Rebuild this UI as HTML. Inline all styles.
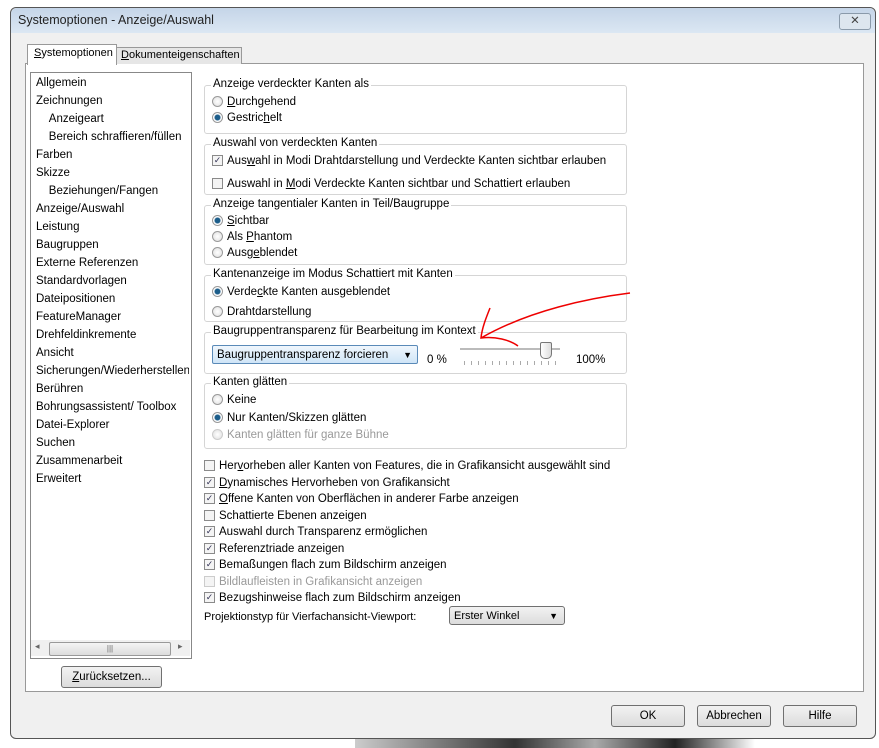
<!DOCTYPE html><html><head><style>
body{margin:0;width:879px;height:748px;background:#fff;position:relative;overflow:hidden;font-family:"Liberation Sans",sans-serif;font-size:11.5px;color:#000}
.a{position:absolute;white-space:nowrap}
.win{position:absolute;left:10px;top:7px;width:864px;height:730px;border:1px solid #555;border-radius:6px;background:#f0f0f0}
.title{position:absolute;left:0;top:0;width:864px;height:25px;background:linear-gradient(#c5d5e8,#dbe7f3);border-radius:6px 6px 0 0}
.panel{position:absolute;left:25px;top:63px;width:837px;height:627px;background:#fff;border:1px solid #999}
.list{position:absolute;left:30px;top:72px;width:160px;height:585px;border:1px solid #888;background:#fff}
.grp{position:absolute;border:1px solid #d5d5d5;border-radius:3px}
.lg{position:absolute;top:-8px;left:6px;background:#fff;padding:0 2px}
.rb{display:inline-block;width:11px;height:11px;border-radius:50%;border:1px solid #999;background:radial-gradient(#fff,#ddd);vertical-align:-2px;margin-right:4px;box-sizing:border-box}
.rb.on{background:radial-gradient(#1c5d8a 2.5px,#fff 3.5px)}
.cb{display:inline-block;width:11px;height:11px;border:1px solid #8a8a8a;background:#f4f4f4;vertical-align:-2px;margin-right:4px;box-sizing:border-box;font-size:9px;line-height:9px;text-align:center;color:#335;overflow:hidden}
.btn{position:absolute;border:1px solid #707070;border-radius:3px;background:linear-gradient(#f2f2f2,#dcdcdc);text-align:center;line-height:20px;height:20px}
.dis{color:#999}
.cl div{height:16.5px;line-height:16px}
</style></head><body>
<div class="win"><div class="title"></div>
<div class="a" style="left:7px;top:5px;font-size:12.5px;color:#222">Systemoptionen - Anzeige/Auswahl</div>
<div class="a" style="left:828px;top:5px;width:30px;height:15px;border:1px solid #8a9aaa;border-radius:3px;background:#dde6ef;text-align:center;line-height:14px;color:#444">✕</div>
</div>
<div class="panel"></div>
<div class="a" style="left:27px;top:44px;width:88px;height:20px;background:#fff;border:1px solid #999;border-bottom:none"></div>
<div class="a" style="left:34px;top:47px;font-size:11px"><u>S</u>ystemoptionen</div>
<div class="a" style="left:116px;top:47px;width:124px;height:16px;background:#e6e6e6;border:1px solid #999;border-bottom:none"></div>
<div class="a" style="left:121px;top:49px;font-size:11px"><u>D</u>okumenteigenschaften</div>
<div class="list"></div>
<div class="a" style="left:36px;top:74px;line-height:18px;font-size:11.5px;width:153px;overflow:hidden">Allgemein<br>Zeichnungen<br>&nbsp;&nbsp;&nbsp;&nbsp;Anzeigeart<br>&nbsp;&nbsp;&nbsp;&nbsp;Bereich schraffieren/füllen<br>Farben<br>Skizze<br>&nbsp;&nbsp;&nbsp;&nbsp;Beziehungen/Fangen<br>Anzeige/Auswahl<br>Leistung<br>Baugruppen<br>Externe Referenzen<br>Standardvorlagen<br>Dateipositionen<br>FeatureManager<br>Drehfeldinkremente<br>Ansicht<br>Sicherungen/Wiederherstellen<br>Berühren<br>Bohrungsassistent/ Toolbox<br>Datei-Explorer<br>Suchen<br>Zusammenarbeit<br>Erweitert</div>
<div class="a" style="left:31px;top:640px;width:159px;height:16px;background:#f0f0f0"></div>
<div class="a" style="left:49px;top:642px;width:120px;height:12px;border:1px solid #999;border-radius:2px;background:linear-gradient(#f4f4f4,#dcdcdc);text-align:center;font-size:8px;line-height:12px;color:#666">|||</div>
<div class="a" style="left:35px;top:641px;font-size:9px;color:#666">◂</div><div class="a" style="left:178px;top:641px;font-size:9px;color:#666">▸</div>
<div class="btn" style="left:61px;top:666px;width:99px"><u>Z</u>urücksetzen...</div>

<div class="grp" style="left:204px;top:85px;width:421px;height:47px"><span class="lg">Anzeige verdeckter Kanten als</span></div>
<div class="a" style="left:212px;top:96px"><span class="rb"></span><u>D</u>urchgehend</div>
<div class="a" style="left:212px;top:112px"><span class="rb on"></span>Gestric<u>h</u>elt</div>

<div class="grp" style="left:204px;top:144px;width:421px;height:49px"><span class="lg">Auswahl von verdeckten Kanten</span></div>
<div class="a" style="left:212px;top:155px"><span class="cb">✓</span>Aus<u>w</u>ahl in Modi Drahtdarstellung und Verdeckte Kanten sichtbar erlauben</div>
<div class="a" style="left:212px;top:178px"><span class="cb"></span>Auswahl in <u>M</u>odi Verdeckte Kanten sichtbar und Schattiert erlauben</div>

<div class="grp" style="left:204px;top:205px;width:421px;height:58px"><span class="lg">Anzeige tangentialer Kanten in Teil/Baugruppe</span></div>
<div class="a" style="left:212px;top:215px"><span class="rb on"></span><u>S</u>ichtbar</div>
<div class="a" style="left:212px;top:231px"><span class="rb"></span>Als <u>P</u>hantom</div>
<div class="a" style="left:212px;top:247px"><span class="rb"></span>Ausg<u>e</u>blendet</div>

<div class="grp" style="left:204px;top:275px;width:421px;height:45px"><span class="lg">Kantenanzeige im Modus Schattiert mit Kanten</span></div>
<div class="a" style="left:212px;top:286px"><span class="rb on"></span>Verde<u>c</u>kte Kanten ausgeblendet</div>
<div class="a" style="left:212px;top:306px"><span class="rb"></span>Drahtdarstellung</div>

<div class="grp" style="left:204px;top:332px;width:421px;height:40px"><span class="lg">Baugruppentransparenz für Bearbeitung im Kontext</span></div>
<div class="a" style="left:212px;top:345px;width:206px;height:19px;border:1px solid #5a8ab8;border-radius:2px;background:linear-gradient(#f0f7fd,#cfe5f7);line-height:19px;padding-left:4px;box-sizing:border-box">Baugruppentransparenz forcieren<span style="position:absolute;right:5px;font-size:9px">▼</span></div>
<div class="a" style="left:427px;top:354px">0 %</div>
<div class="a" style="left:576px;top:354px">100%</div>
<div class="a" style="left:460px;top:348px;width:100px;height:2px;background:#bbb;border-bottom:1px solid #fff"></div>
<div class="a" style="left:540px;top:342px;width:10px;height:15px;border:1px solid #777;border-radius:2px 2px 5px 5px;background:linear-gradient(90deg,#fff,#ddd)"></div>
<div class="a" style="left:464px;top:361px;width:94px;height:4px;background:repeating-linear-gradient(90deg,#aaa 0 1px,transparent 1px 7px)"></div>

<div class="grp" style="left:204px;top:383px;width:421px;height:64px"><span class="lg">Kanten glätten</span></div>
<div class="a" style="left:212px;top:394px"><span class="rb"></span>Keine</div>
<div class="a" style="left:212px;top:412px"><span class="rb on"></span>Nur Kanten/Skizzen glätten</div>
<div class="a dis" style="left:212px;top:429px"><span class="rb" style="border-color:#ccc"></span>Kanten glätten für ganze Bühne</div>

<div class="a cl" style="left:204px;top:458px">
<div><span class="cb"></span>Her<u>v</u>orheben aller Kanten von Features, die in Grafikansicht ausgewählt sind</div>
<div><span class="cb">✓</span><u>D</u>ynamisches Hervorheben von Grafikansicht</div>
<div><span class="cb">✓</span><u>O</u>ffene Kanten von Oberflächen in anderer Farbe anzeigen</div>
<div><span class="cb"></span>Schattierte Ebenen anzeigen</div>
<div><span class="cb">✓</span>Auswahl durch Transparenz ermöglichen</div>
<div><span class="cb">✓</span>Referenztriade anzeigen</div>
<div><span class="cb">✓</span>Bemaßungen flach zum Bildschirm anzeigen</div>
<div class="dis"><span class="cb" style="border-color:#ccc"></span>Bildlaufleisten in Grafikansicht anzeigen</div>
<div><span class="cb">✓</span>Bezugshinweise flach zum Bildschirm anzeigen</div></div>
<div class="a" style="left:204px;top:611px;font-size:11px">Projektionstyp für Vierfachansicht-Viewport:</div>
<div class="btn" style="left:449px;top:606px;width:116px;height:19px;line-height:19px;text-align:left;padding-left:4px;box-sizing:border-box;font-size:11px">Erster Winkel<span style="position:absolute;right:6px;font-size:9px">▼</span></div>

<div class="btn" style="left:611px;top:705px;width:72px">OK</div>
<div class="btn" style="left:697px;top:705px;width:72px">Abbrechen</div>
<div class="btn" style="left:783px;top:705px;width:72px">Hilfe</div>

<div class="a" style="left:355px;top:739px;width:400px;height:9px;background:linear-gradient(90deg,#ccc,#333 40%,#aaa 60%,#222 80%,#fff)"></div>
<svg class="a" style="left:470px;top:290px" width="170" height="60"><path d="M160 3 C120 8 60 20 11 48 M20 18 C16 28 12 38 11 48 C25 46 40 50 48 56" fill="none" stroke="#e00" stroke-width="1.5"/></svg>
</body></html>
